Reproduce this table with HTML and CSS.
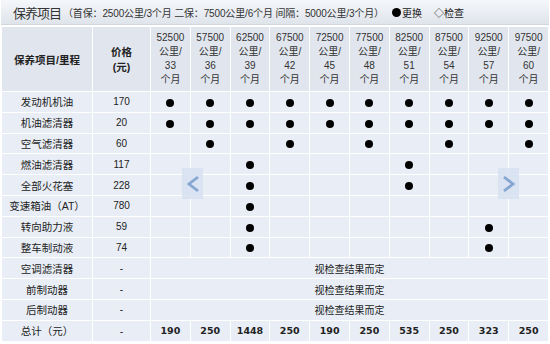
FILE: index.html
```html
<!DOCTYPE html>
<html lang="zh">
<head>
<meta charset="utf-8">
<link rel="stylesheet" href="styles.css">
</head>
<body>
<div class="panel">
  <div class="title"><span class="title-main">保养项目</span><span class="title-sub">（首保：2500公里/3个月 二保：7500公里/6个月 间隔：5000公里/3个月）</span><span class="legend"><i class="ldot"></i>更换</span><span class="legend legend-check">◇检查</span></div>
  <div class="table-wrap">
    <table class="grid">
      <colgroup><col class="c-name"><col class="c-price"><col span="10"></colgroup>
      <thead>
        <tr>
          <th>保养项目/里程</th>
          <th>价格<br>(元)</th>
          <th class="mh">52500<br>公里/<br>33<br>个月</th>
          <th class="mh">57500<br>公里/<br>36<br>个月</th>
          <th class="mh">62500<br>公里/<br>39<br>个月</th>
          <th class="mh">67500<br>公里/<br>42<br>个月</th>
          <th class="mh">72500<br>公里/<br>45<br>个月</th>
          <th class="mh">77500<br>公里/<br>48<br>个月</th>
          <th class="mh">82500<br>公里/<br>51<br>个月</th>
          <th class="mh">87500<br>公里/<br>54<br>个月</th>
          <th class="mh">92500<br>公里/<br>57<br>个月</th>
          <th class="mh">97500<br>公里/<br>60<br>个月</th>
        </tr>
      </thead>
      <tbody>
        <tr><td>发动机机油</td><td>170</td><td><i class="dot"></i></td><td><i class="dot"></i></td><td><i class="dot"></i></td><td><i class="dot"></i></td><td><i class="dot"></i></td><td><i class="dot"></i></td><td><i class="dot"></i></td><td><i class="dot"></i></td><td><i class="dot"></i></td><td><i class="dot"></i></td></tr>
        <tr><td>机油滤清器</td><td>20</td><td><i class="dot"></i></td><td><i class="dot"></i></td><td><i class="dot"></i></td><td><i class="dot"></i></td><td><i class="dot"></i></td><td><i class="dot"></i></td><td><i class="dot"></i></td><td><i class="dot"></i></td><td><i class="dot"></i></td><td><i class="dot"></i></td></tr>
        <tr><td>空气滤清器</td><td>60</td><td></td><td><i class="dot"></i></td><td></td><td><i class="dot"></i></td><td></td><td><i class="dot"></i></td><td></td><td><i class="dot"></i></td><td></td><td><i class="dot"></i></td></tr>
        <tr><td>燃油滤清器</td><td>117</td><td></td><td></td><td><i class="dot"></i></td><td></td><td></td><td></td><td><i class="dot"></i></td><td></td><td></td><td></td></tr>
        <tr><td>全部火花塞</td><td>228</td><td></td><td></td><td><i class="dot"></i></td><td></td><td></td><td></td><td><i class="dot"></i></td><td></td><td></td><td></td></tr>
        <tr><td>变速箱油（AT）</td><td>780</td><td></td><td></td><td><i class="dot"></i></td><td></td><td></td><td></td><td></td><td></td><td></td><td></td></tr>
        <tr><td>转向助力液</td><td>59</td><td></td><td></td><td><i class="dot"></i></td><td></td><td></td><td></td><td></td><td></td><td><i class="dot"></i></td><td></td></tr>
        <tr><td>整车制动液</td><td>74</td><td></td><td></td><td><i class="dot"></i></td><td></td><td></td><td></td><td></td><td></td><td><i class="dot"></i></td><td></td></tr>
        <tr><td>空调滤清器</td><td>-</td><td colspan="10">视检查结果而定</td></tr>
        <tr><td>前制动器</td><td>-</td><td colspan="10">视检查结果而定</td></tr>
        <tr><td>后制动器</td><td>-</td><td colspan="10">视检查结果而定</td></tr>
        <tr class="total"><td>总计（元）</td><td>-</td><td>190</td><td>250</td><td>1448</td><td>250</td><td>190</td><td>250</td><td>535</td><td>250</td><td>323</td><td>250</td></tr>
      </tbody>
    </table>
    <div class="arrow arrow-left"><svg width="14" height="18" viewBox="0 0 14 18"><path d="M12 2 L3 9 L12 16" fill="none" stroke="#86a6d2" stroke-width="2.8"/></svg></div>
    <div class="arrow arrow-right"><svg width="14" height="18" viewBox="0 0 14 18"><path d="M2 2 L11 9 L2 16" fill="none" stroke="#86a6d2" stroke-width="2.8"/></svg></div>
  </div>
</div>
</body>
</html>
```
FILE: styles.css
```css
html, body {
  margin: 0;
  padding: 0;
  background: #ffffff;
}
body {
  font-family: "Liberation Sans", "Noto Sans CJK SC", sans-serif;
  color: #222;
  width: 550px;
  height: 344px;
  overflow: hidden;
}
.panel {
  display: flex;
  flex-direction: column;
  padding: 0 1px;
}
.title {
  height: 24px;
  display: flex;
  align-items: center;
  padding-left: 12px;
  background: linear-gradient(#f5f7fa, #dfe4eb);
  border-bottom: 1px solid #cfd6e0;
  white-space: nowrap;
}
.title-main {
  font-size: 13px;
  color: #333;
  letter-spacing: -1px;
}
.title-sub {
  font-size: 10px;
  color: #333;
  margin-left: 2px;
  letter-spacing: -0.15px;
}
.legend {
  font-size: 10px;
  color: #222;
  margin-left: 8px;
  display: inline-flex;
  align-items: center;
}
.legend-check {
  margin-left: 12px;
}
.ldot {
  display: inline-block;
  width: 9px;
  height: 9px;
  border-radius: 50%;
  background: #000;
  margin-right: 1px;
}
.table-wrap {
  position: relative;
  margin-top: 1px;
}
.grid {
  width: 548px;
  table-layout: fixed;
  border-collapse: separate;
  border-spacing: 1px;
  background: #ffffff;
  font-size: 10px;
}
.c-name { width: 90px; }
.c-price { width: 57px; }
.grid th {
  background: #e1e6ee;
  font-weight: bold;
  font-size: 10.5px;
  height: 64px;
  padding: 0;
  text-align: center;
  color: #222;
}
.grid th.mh {
  font-weight: normal;
  font-size: 10px;
  line-height: 14px;
  color: #333;
}
.grid td {
  background: #e9eef6;
  height: 19.8px;
  padding: 0;
  text-align: center;
  color: #222;
  white-space: nowrap;
}
.grid td:first-child {
  font-size: 10.5px;
}
.grid tr.total td {
  font-family: "DejaVu Sans", sans-serif;
  font-weight: bold;
  font-size: 9.5px;
}
.grid tr.total td:first-child,
.grid tr.total td:nth-child(2) {
  font-family: "Liberation Sans", "Noto Sans CJK SC", sans-serif;
  font-weight: normal;
  font-size: 10.5px;
}
.dot {
  display: inline-block;
  width: 8px;
  height: 8px;
  border-radius: 50%;
  background: #000;
  vertical-align: middle;
}
.arrow {
  position: absolute;
  width: 21px;
  height: 31px;
  background: rgba(214, 225, 240, 0.85);
  display: flex;
  align-items: center;
  justify-content: center;
}
.arrow-left { left: 181px; top: 142px; }
.arrow-right { left: 497px; top: 142px; }
```
